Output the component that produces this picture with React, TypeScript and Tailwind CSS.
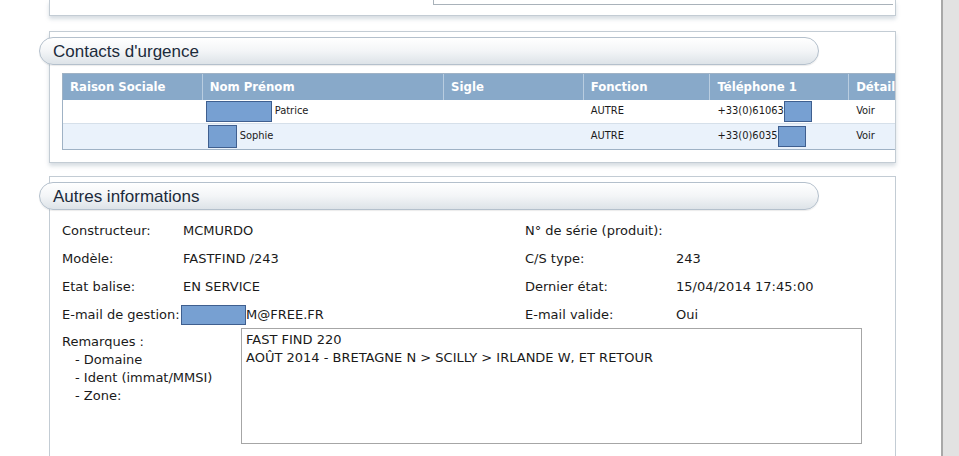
import React from 'react';

const condensed = { fontFamily: '"DejaVu Sans Condensed", "DejaVu Sans", Verdana, sans-serif' };
const regular = { fontFamily: '"DejaVu Sans", Verdana, sans-serif' };

function Pill({ title }: { title: string }) {
  return (
    <div className="-ml-[11px] w-[780px] h-[28px] rounded-full border border-[#b4c0cc] bg-gradient-to-b from-white via-[#f3f5f7] to-[#dde3e8] flex items-center pl-[13px] shadow-[0_1px_1px_rgba(0,0,0,0.08)]">
      <span className="text-[17px] text-[#1c2b3b] font-['Liberation_Sans',Arial,sans-serif] leading-none">{title}</span>
    </div>
  );
}

function Redact({ w, h }: { w: number; h: number }) {
  return <span className="inline-block bg-[#77a0d2] border border-[#3f5f8f] align-middle" style={{ width: w, height: h }} />;
}

const cols = [
  { label: 'Raison Sociale', w: 139 },
  { label: 'Nom Prénom', w: 242 },
  { label: 'Sigle', w: 140 },
  { label: 'Fonction', w: 127 },
  { label: 'Téléphone 1', w: 139 },
  { label: 'Détail', w: 70 },
];

function Field({ label, children }: { label: string; children: React.ReactNode }) {
  return (
    <div className="flex items-center h-[28px]">
      <span className="w-[121px] shrink-0">{label}</span>
      <span className="flex items-center">{children}</span>
    </div>
  );
}

export default function App() {
  return (
    <div className="w-[959px] h-[456px] overflow-hidden flex bg-white" style={condensed}>
      <div className="w-[941px] shrink-0 flex flex-col">
        {/* top panel (cut) */}
        <div className="ml-[49px] w-[847px] h-[16px] border-x border-b border-[#c3ccd4] shadow-[0_3px_4px_rgba(120,140,160,0.3)] flex">
          <div className="ml-[383px] w-[460px] h-[5px] border-l border-b border-[#a9b2ba]" />
        </div>

        {/* Contacts d'urgence */}
        <div className="mt-[15px] ml-[49px] w-[847px] h-[132px] border border-[#c3ccd4] shadow-[0_3px_4px_rgba(120,140,160,0.3)] pt-[5px]">
          <Pill title="Contacts d'urgence" />
          <div className="mt-[8px] ml-[12px] overflow-hidden w-[833px]">
            <div className="w-[857px] border border-[#9fb2c5] text-[11px] text-[#1a1a1a]">
              <div className="flex h-[26px] bg-[#88a9c9] text-white font-bold text-[13px]">
                {cols.map((c, i) => (
                  <div
                    key={c.label}
                    className={`flex items-center pl-[7px] ${i > 0 ? 'border-l border-[#b9cde0]' : ''}`}
                    style={{ width: c.w }}
                  >
                    {c.label}
                  </div>
                ))}
              </div>
              <div className="flex h-[24px] bg-white border-b border-[#d6e0ea]">
                <div style={{ width: 139 }} />
                <div style={{ width: 242 }} className="flex items-center pl-[4px] gap-[3px]">
                  <Redact w={66} h={21} />
                  <span>Patrice</span>
                </div>
                <div style={{ width: 140 }} />
                <div style={{ width: 127 }} className="flex items-center pl-[8px]">AUTRE</div>
                <div style={{ width: 139 }} className="flex items-center pl-[8px]">
                  <span>+33(0)61063</span>
                  <Redact w={28} h={21} />
                </div>
                <div style={{ width: 70 }} className="flex items-center pl-[8px]">Voir</div>
              </div>
              <div className="flex h-[25px] bg-[#eaf2fb]">
                <div style={{ width: 139 }} />
                <div style={{ width: 242 }} className="flex items-center pl-[6px] gap-[3px]">
                  <Redact w={29} h={23} />
                  <span>Sophie</span>
                </div>
                <div style={{ width: 140 }} />
                <div style={{ width: 127 }} className="flex items-center pl-[8px]">AUTRE</div>
                <div style={{ width: 139 }} className="flex items-center pl-[8px]">
                  <span>+33(0)6035</span>
                  <Redact w={28} h={21} />
                </div>
                <div style={{ width: 70 }} className="flex items-center pl-[8px]">Voir</div>
              </div>
            </div>
          </div>
        </div>

        {/* Autres informations */}
        <div className="mt-[13px] ml-[49px] w-[847px] flex-1 border-x border-t border-[#c3ccd4] pt-[5px]">
          <Pill title="Autres informations" />
          <div className="ml-[12px] mt-[7px] text-[13px] text-[#1a1a1a]" style={regular}>
            <div className="flex">
              <div className="w-[463px]">
                <Field label="Constructeur:">MCMURDO</Field>
                <Field label="Modèle:">FASTFIND /243</Field>
                <Field label="Etat balise:">EN SERVICE</Field>
                <Field label="E-mail de gestion:">
                  <span className="-ml-[2px] flex">
                    <Redact w={65} h={20} />
                  </span>
                  <span>M@FREE.FR</span>
                </Field>
              </div>
              <div className="flex flex-col">
                <div className="flex items-center h-[28px]"><span className="w-[151px]">N° de série (produit):</span></div>
                <div className="flex items-center h-[28px]"><span className="w-[151px]">C/S type:</span>243</div>
                <div className="flex items-center h-[28px]"><span className="w-[151px]">Dernier état:</span>15/04/2014 17:45:00</div>
                <div className="flex items-center h-[28px]"><span className="w-[151px]">E-mail valide:</span>Oui</div>
              </div>
            </div>
            <div className="flex">
              <div className="w-[179px] pt-[4px] leading-[18px]">
                <div>Remarques :</div>
                <div className="pl-[13px]">- Domaine</div>
                <div className="pl-[13px]">- Ident (immat/MMSI)</div>
                <div className="pl-[13px]">- Zone:</div>
              </div>
              <div className="-mt-[1px] w-[621px] h-[116px] border border-[#a6a6a6] px-[4px] pt-[2px] leading-[18px]">
                <div>FAST FIND 220</div>
                <div>AOÛT 2014 - BRETAGNE N &gt; SCILLY &gt; IRLANDE W, ET RETOUR</div>
              </div>
            </div>
          </div>
        </div>
      </div>
      <div className="flex-1 border-l-2 border-[#a8a8a8] bg-[#e2e2e2]" />
    </div>
  );
}
